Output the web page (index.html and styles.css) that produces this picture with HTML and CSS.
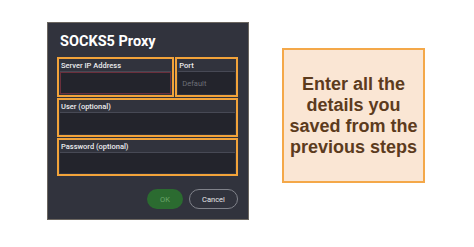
FILE: index.html
```html
<!DOCTYPE html>
<html>
<head>
<meta charset="utf-8">
<link rel="stylesheet" href="styles.css">
</head>
<body>
<div class="page">
  <div class="dialog">
    <div class="title">SOCKS5 Proxy</div>
    <div class="fields">
      <div class="row">
        <div class="box server">
          <div class="label">Server IP Address</div>
          <div class="input error"></div>
        </div>
        <div class="box port">
          <div class="label">Port</div>
          <div class="input"><span class="ph">Default</span></div>
        </div>
      </div>
      <div class="box user">
        <div class="label">User (optional)</div>
        <div class="input"></div>
      </div>
      <div class="box pass">
        <div class="label">Password (optional)</div>
        <div class="input"></div>
      </div>
    </div>
    <div class="buttons">
      <div class="btn ok">OK</div>
      <div class="btn cancel">Cancel</div>
    </div>
  </div>
  <div class="callout">
    <p>Enter all the details you saved from the previous steps</p>
  </div>
</div>
</body>
</html>
```

FILE: styles.css
```css
html, body {
  margin: 0;
  padding: 0;
  background: #ffffff;
}
.page {
  display: flex;
  align-items: flex-start;
  width: 474px;
  height: 247px;
}
.dialog {
  margin-left: 47px;
  margin-top: 22px;
  width: 202px;
  height: 198px;
  box-sizing: border-box;
  background: #31333d;
  border: 1px solid #6b6660;
  padding: 10px 10px 0 9px;
  display: flex;
  flex-direction: column;
  font-family: Roboto, "Noto Sans", sans-serif;
}
.title {
  color: #ffffff;
  font-weight: 700;
  font-size: 14.5px;
  line-height: 17px;
  padding-left: 3px;
  height: 24px;
}
.fields {
  display: flex;
  flex-direction: column;
  gap: 1px;
}
.row {
  display: flex;
  gap: 1px;
}
.box {
  border: 2px solid #f2a33a;
  padding: 0 1px 1px 1px;
  display: flex;
  flex-direction: column;
}
.server { width: 114px; height: 35px; }
.port { width: 58px; height: 35px; }
.user { height: 34px; }
.pass { height: 33px; }
.label {
  color: #ececee;
  font-size: 7.5px;
  font-weight: 500;
  line-height: 13px;
  height: 13px;
  padding-left: 1px;
  border-bottom: 1px solid #474955;
  box-sizing: border-box;
}
.input {
  flex: 1;
  background: #23242c;
  box-sizing: border-box;
  display: flex;
  align-items: center;
  padding-left: 4px;
}
.input.error {
  border: 1px solid #6b2f3c;
}
.ph {
  color: #6d6f78;
  font-size: 7.5px;
}
.buttons {
  display: flex;
  justify-content: flex-end;
  gap: 6px;
  margin-top: 13px;
}
.btn {
  height: 20px;
  border-radius: 10px;
  box-sizing: border-box;
  display: flex;
  align-items: center;
  justify-content: center;
  font-size: 7.5px;
}
.ok {
  width: 36px;
  background: #2b6b30;
  color: #6aa56b;
}
.cancel {
  width: 49px;
  border: 1px solid #80828a;
  color: #e6e6e8;
}
.callout {
  margin-left: 33px;
  margin-top: 48px;
  width: 143px;
  height: 135px;
  box-sizing: border-box;
  background: #fae6d4;
  border: 2px solid #f4a849;
  display: flex;
  align-items: center;
  justify-content: center;
}
.callout p {
  margin: 0;
  text-align: center;
  font-family: "Liberation Sans", Arial, sans-serif;
  font-weight: 700;
  font-size: 18px;
  line-height: 21px;
  color: #5c3b1d;
  padding: 0 4px;
}
```
